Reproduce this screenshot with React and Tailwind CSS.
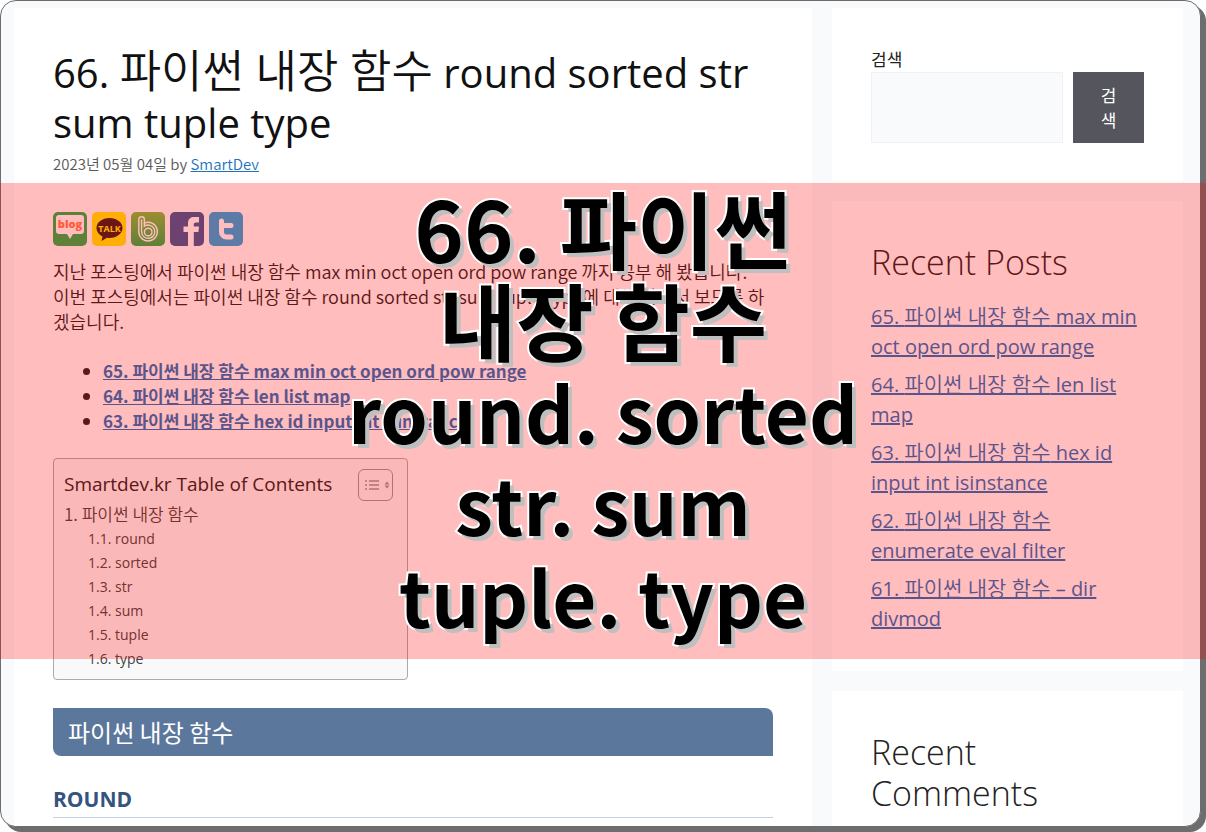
import React from 'react';

const recentPosts = [
  { no: 65, first: ' max min', second: 'oct open ord pow range' },
  { no: 64, first: ' len list', second: 'map' },
  { no: 63, first: ' hex id', second: 'input int isinstance' },
  { no: 62, first: '', second: 'enumerate eval filter' },
  { no: 61, first: ' – dir', second: 'divmod' },
];

const relatedPosts = [
  '65. 파이썬 내장 함수 max min oct open ord pow range',
  '64. 파이썬 내장 함수 len list map',
  '63. 파이썬 내장 함수 hex id input int isinstance',
];

const tocItems = ['round', 'sorted', 'str', 'sum', 'tuple', 'type'];

const BlogIcon = () => (
  <svg viewBox="0 0 34 34" className="size-[34px]">
    <rect width="34" height="34" rx="5" fill="#27ad4c" />
    <path d="M6 3h22a3 3 0 0 1 3 3v13a3 3 0 0 1-3 3h-8l-3 5-3-5H6a3 3 0 0 1-3-3V6a3 3 0 0 1 3-3z" fill="#fff" />
    <text x="17" y="16" textAnchor="middle" fontSize="11" fontWeight="800" fontFamily="Open Sans" fill="#ff7a50">blog</text>
  </svg>
);

const TalkIcon = () => (
  <svg viewBox="0 0 34 34" className="size-[34px]">
    <rect width="34" height="34" rx="5" fill="#ffeb0b" />
    <path d="M17.500 6C10.300 6 4.500 10.400 4.500 16c0 3.600 2.400 6.600 6 8.400L9.500 29l5.500-3.300c.8.100 1.600.200 2.500.200 7.200 0 13-4.300 13-9.900S24.700 6 17.500 6z" fill="#3b1e1e" />
    <text x="17.500" y="19.500" textAnchor="middle" fontSize="9" fontWeight="700" fontFamily="Open Sans" fill="#ffeb0b">TALK</text>
  </svg>
);

const BandIcon = () => (
  <svg viewBox="0 0 34 34" className="size-[34px]">
    <defs>
      <linearGradient id="band" x1="0" y1="0" x2="0" y2="1">
        <stop offset="0" stopColor="#7bbf41" />
        <stop offset="1" stopColor="#27ad4c" />
      </linearGradient>
    </defs>
    <rect width="34" height="34" rx="5" fill="url(#band)" />
    <g fill="none" stroke="#fff" strokeWidth="1.400">
      <path d="M7.800 20V7.500a2.800 2.800 0 0 1 5.600 0v3.600A9.300 9.300 0 1 1 7.800 20z" />
      <path d="M10.600 20V7.500" />
      <path d="M13.400 11v3.300A6.600 6.600 0 1 1 10.600 20" />
      <circle cx="17.200" cy="20" r="3.800" />
    </g>
  </svg>
);

const FacebookIcon = () => (
  <svg viewBox="0 0 34 34" className="size-[34px]">
    <rect width="34" height="34" rx="5" fill="#3b5998" />
    <path d="M18 34V20h-4.500v-5.500H18V11c0-4.200 2.700-6 6.500-6H29v5.500h-2.800c-1.800 0-2.400.8-2.400 2.300v1.700H29L28.400 20h-4.600v14z" fill="#fff" />
  </svg>
);

const TwitterIcon = () => (
  <svg viewBox="0 0 34 34" className="size-[34px]">
    <rect width="34" height="34" rx="5" fill="#26a5e2" />
    <path d="M12.500 9v11a5 5 0 0 0 5 5H22M12.500 13.500H22" fill="none" stroke="#fff" strokeWidth="5" strokeLinecap="round" />
  </svg>
);

const TocIcon = () => (
  <svg viewBox="0 0 28 14" className="h-[14px] w-[28px]" fill="none" stroke="#999" strokeWidth="1.300">
    <path d="M3 3h2M3 7h2M3 11h2M7 3h10M7 7h10M7 11h10" />
    <path d="M22.500 6.500l2.500-3 2.500 3zM22.500 7.500l2.500 3 2.500-3z" fill="#999" stroke="none" />
  </svg>
);

const shareLinks = [
  { name: 'blog', Icon: BlogIcon },
  { name: 'talk', Icon: TalkIcon },
  { name: 'band', Icon: BandIcon },
  { name: 'facebook', Icon: FacebookIcon },
  { name: 'twitter', Icon: TwitterIcon },
];

const Article = () => (
  <main className="min-w-0 flex-1 bg-white px-[39px] pt-10 font-['Noto_Sans_CJK_KR',sans-serif]">
    <h1 className="font-['Open_Sans','Noto_Sans_CJK_KR',sans-serif] text-[40px] leading-[50px] whitespace-nowrap text-[#111]">
      66. <span className="text-[45px] leading-10 font-[350]">파이썬 내장 함수</span> round sorted str<br />sum tuple type
    </h1>
    <p className="mt-1 text-[15px] leading-6 font-[350] text-[#595959]">
      2023년 05월 04일 by <a href="#author" className="text-[#1e73be] underline">SmartDev</a>
    </p>

    <div className="mt-9 flex gap-[5px]">
      {shareLinks.map(({ name, Icon }) => (
        <a key={name} href={`#${name}`} aria-label={name}>
          <Icon />
        </a>
      ))}
    </div>

    <p className="mt-[13px] text-[18px] leading-[25px] font-[350] whitespace-nowrap">
      지난 포스팅에서 파이썬 내장 함수 max min oct open ord pow range 까지 공부 해 봤습니다.<br />
      이번 포스팅에서는 파이썬 내장 함수 round sorted str sum tuple type에 대해 알아서 보도록 하<br />
      겠습니다.
    </p>

    <ul className="mt-6 list-disc pl-[50px] text-[17px] leading-[25px] font-bold">
      {relatedPosts.map((post) => (
        <li key={post}>
          <a href="#post" className="text-[#1e73be] underline">{post}</a>
        </li>
      ))}
    </ul>

    <nav className="mt-[25px] w-[355px] rounded border border-[#aaa] bg-[#f9f9f9] px-[10px] pt-[10px] pb-2 font-['Open_Sans','Noto_Sans_CJK_KR',sans-serif]">
      <div className="flex items-start justify-between pr-1">
        <span className="text-[19px] leading-[30px]">Smartdev.kr Table of Contents</span>
        <button type="button" aria-label="Toggle table of contents" className="flex h-8 w-[35px] items-center justify-center rounded-md border border-[#999]">
          <TocIcon />
        </button>
      </div>
      <a href="#toc" className="block font-['Noto_Sans_CJK_KR',sans-serif] text-[17px] leading-[26px] font-[350] text-[#444]">1. 파이썬 내장 함수</a>
      <ol className="pl-6 text-[14px] leading-6 text-[#444]">
        {tocItems.map((item, i) => (
          <li key={item}>
            <a href={`#${item}`}>1.{i + 1}. {item}</a>
          </li>
        ))}
      </ol>
    </nav>

    <h2 className="mt-7 rounded-tr-lg rounded-bl-lg bg-[#5c779c] px-[15px] text-[24px] leading-[48px] text-white">
      파이썬 내장 함수
    </h2>
    <h3 className="mt-[27px] border-b border-[#c5d2e3] pb-0.5 font-['Open_Sans',sans-serif] text-[21px] leading-8 font-bold text-[#34547f]">ROUND</h3>
  </main>
);

const Sidebar = () => (
  <aside className="flex w-[351px] shrink-0 flex-col gap-5">
    <form className="bg-white px-[39px] pt-10 pb-[38px]">
      <label htmlFor="search" className="block text-[17px] leading-6">검색</label>
      <div className="flex gap-[10px]">
        <input id="search" type="text" className="h-[71px] w-full min-w-0 border border-[#eff1f4] bg-[#f9fafc] px-4" />
        <button type="button" className="w-[71px] shrink-0 bg-[#55555e] px-6 text-[17px] leading-[25px] text-white">검색</button>
      </div>
    </form>

    <section className="bg-white px-[39px] pt-[41px] pb-[37px]">
      <h2 className="mb-[19px] text-[34px] leading-[41px] font-[350]">Recent Posts</h2>
      <ul className="space-y-2 text-[20px] leading-[30px]">
        {recentPosts.map(({ no, first, second }) => (
          <li key={no}>
            <a href="#post" className="text-[#1e73be] underline">
              {no}. <span className="text-[21px] leading-6 font-[350]">파이썬 내장 함수</span>{first}<br />{second}
            </a>
          </li>
        ))}
      </ul>
    </section>

    <section className="bg-white px-[39px] pt-[41px] pb-10">
      <h2 className="text-[34px] leading-[41px] font-[350]">Recent<br />Comments</h2>
    </section>
  </aside>
);

// translucent title band laid over the page
const Banner = () => (
  <div className="pointer-events-none absolute inset-x-0 top-[22%] flow-root bg-[rgba(255,0,0,0.26)] pb-[18px] text-center font-['Noto_Sans_CJK_KR',sans-serif] text-[76px] leading-[92px] font-bold text-black [paint-order:stroke_fill] [text-shadow:4px_4px_0_#bfbfbf] [-webkit-text-stroke:4px_white]">
    <div className="-mt-0.5 text-[84px]">
      <p>66. 파이썬</p>
      <p>내장 함수</p>
    </div>
    <p>round. sorted</p>
    <p>str. sum</p>
    <p>tuple. type</p>
  </div>
);

const App = () => (
  <div className="relative h-screen overflow-hidden bg-white pr-[5px] pb-[5px] font-['Open_Sans','Noto_Sans_CJK_KR',sans-serif] text-[#222]">
    <div className="h-full overflow-hidden rounded-2xl border border-[#6d6d6d] bg-[#f9fafc] shadow-[5px_5px_0_#6d6d6d]">
      <div className="flex min-h-full gap-5 pt-[7px] pr-[17px] pl-[13px]">
        <Article />
        <Sidebar />
      </div>
    </div>
    <Banner />
  </div>
);

export default App;
